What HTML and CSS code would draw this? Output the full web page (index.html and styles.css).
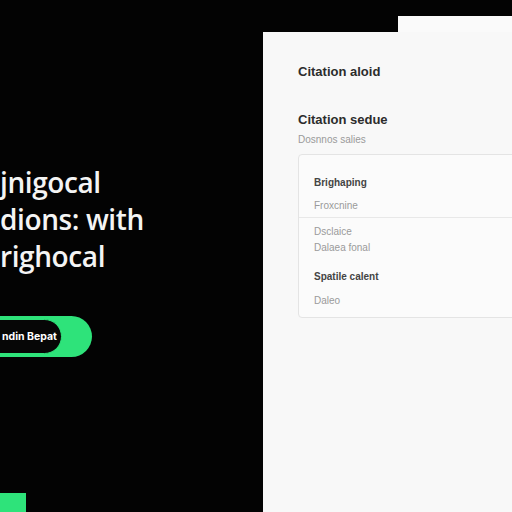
FILE: index.html
```html
<!DOCTYPE html>
<html>
<head>
<meta charset="utf-8">
<link rel="stylesheet" href="styles.css">
</head>
<body>
<div class="page">
  <section class="hero">
    <h1 class="headline">jnigocal<br>dions: with<br>righocal</h1>
    <div class="cta">
      <div class="cta-inner">ndin Bepat</div>
    </div>
    <div class="spacer"></div>
    <div class="green-block"></div>
  </section>
  <section class="side">
    <div class="tab"></div>
    <div class="panel">
      <h2 class="title">Citation aloid</h2>
      <h2 class="title second">Citation sedue</h2>
      <p class="sub">Dosnnos salies</p>
      <div class="card">
        <div class="item strong">Brighaping</div>
        <div class="item gap11">Froxcnine</div>
        <div class="divider"></div>
        <div class="item">Dsclaice</div>
        <div class="item gap4">Dalaea fonal</div>
        <div class="item strong gap17">Spatile calent</div>
        <div class="item gap12">Daleo</div>
      </div>
    </div>
  </section>
</div>
</body>
</html>
```

FILE: styles.css
```css
html, body {
  margin: 0;
  padding: 0;
  background: #030303;
}
.page {
  display: flex;
  width: 512px;
  height: 512px;
  overflow: hidden;
  font-family: "Liberation Sans", Arial, sans-serif;
}
.hero {
  width: 263px;
  flex: none;
  display: flex;
  flex-direction: column;
}
.headline {
  margin: 164px 0 0 0;
  font-family: "Open Sans", sans-serif;
  font-weight: 600;
  font-size: 28px;
  line-height: 37px;
  color: #f4f4f4;
  letter-spacing: -0.4px;
}
.cta {
  margin-top: 41px;
  margin-left: -40px;
  width: 132px;
  height: 41px;
  border-radius: 21px;
  background: #2ee37a;
  display: flex;
  align-items: center;
}
.cta-inner {
  width: 102px;
  height: 35px;
  box-sizing: border-box;
  border-radius: 18px;
  background: #060606;
  border: 1px solid #2ee37a;
  display: flex;
  align-items: center;
  padding-left: 41px;
  color: #ffffff;
  font-family: Inter, sans-serif;
  font-weight: 700;
  font-size: 10.5px;
  white-space: nowrap;
}
.spacer {
  flex: 1;
}
.green-block {
  width: 26px;
  height: 19px;
  background: #2ee37a;
}
.side {
  flex: 1;
  display: flex;
  flex-direction: column;
}
.tab {
  margin-top: 16px;
  margin-left: 135px;
  height: 16px;
  background: #fafafa;
}
.panel {
  flex: 1;
  background: #f8f8f8;
  padding: 32px 0 0 35px;
}
.title {
  margin: 0;
  font-size: 13px;
  line-height: 16px;
  font-weight: 700;
  color: #2c2c2c;
}
.title.second {
  margin-top: 32px;
}
.sub {
  margin: 6px 0 0 0;
  font-size: 10px;
  line-height: 12px;
  color: #9a9a9a;
}
.card {
  margin-top: 8px;
  margin-right: -8px;
  background: #fbfbfb;
  border: 1px solid #e4e4e4;
  border-radius: 4px;
  padding: 22px 0 10px 0;
}
.item {
  padding-left: 15px;
  font-size: 10px;
  line-height: 12px;
  color: #9a9a9a;
}
.item.strong {
  font-weight: 700;
  color: #444444;
}
.gap11 { margin-top: 11px; }
.gap4 { margin-top: 4px; }
.gap17 { margin-top: 17px; }
.gap12 { margin-top: 12px; }
.divider {
  height: 1px;
  background: #e8e8e8;
  margin: 5px 0 8px 0;
}
```
